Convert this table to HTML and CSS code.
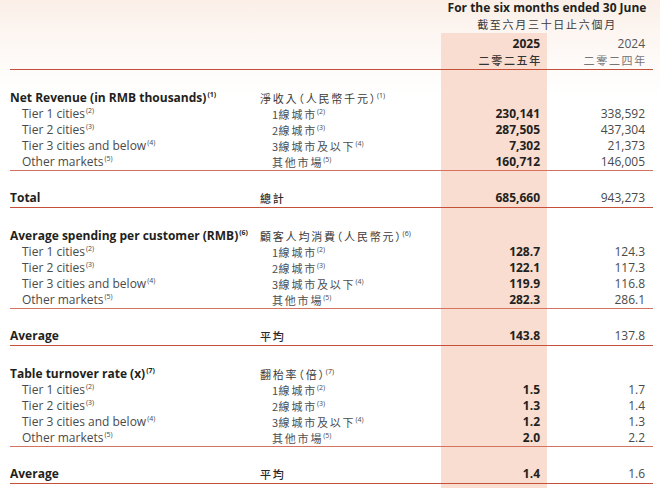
FILE: index.html
```html
<!DOCTYPE html>
<html lang="en">
<head>
<meta charset="utf-8">
<title>Operating data</title>
<link rel="stylesheet" href="styles.css">
</head>
<body>
<div class="page">
<table class="data">
  <colgroup>
    <col class="c-en">
    <col class="c-zh">
    <col class="c-cur">
    <col class="c-prev">
  </colgroup>
  <tbody>
    <tr class="h1">
      <td></td><td></td>
      <td colspan="2" class="period">For the six months ended 30 June</td>
    </tr>
    <tr class="h2">
      <td></td><td></td>
      <td colspan="2" class="period-zh">截至六月三十日止六個月</td>
    </tr>
    <tr class="h3">
      <td></td><td></td>
      <td class="num cur">2025</td>
      <td class="num prev light">2024</td>
    </tr>
    <tr class="h4 thick">
      <td></td><td></td>
      <td class="num cur zh-yr">二零二五年</td>
      <td class="num prev zh-yr light">二零二四年</td>
    </tr>

    <tr class="first">
      <td class="en head">Net Revenue (in RMB thousands)<span class="s">(1)</span></td>
      <td class="zh head-zh">淨收入（人民幣千元）<span class="s">(1)</span></td>
      <td class="num cur"></td><td class="num prev"></td>
    </tr>
    <tr>
      <td class="en sub">Tier 1 cities<span class="s">(2)</span></td>
      <td class="zh sub"><span class="d">1</span>線城市<span class="s">(2)</span></td>
      <td class="num cur">230,141</td><td class="num prev">338,592</td>
    </tr>
    <tr>
      <td class="en sub">Tier 2 cities<span class="s">(3)</span></td>
      <td class="zh sub"><span class="d">2</span>線城市<span class="s">(3)</span></td>
      <td class="num cur">287,505</td><td class="num prev">437,304</td>
    </tr>
    <tr>
      <td class="en sub">Tier 3 cities and below<span class="s">(4)</span></td>
      <td class="zh sub"><span class="d">3</span>線城市及以下<span class="s">(4)</span></td>
      <td class="num cur">7,302</td><td class="num prev">21,373</td>
    </tr>
    <tr class="thin">
      <td class="en sub">Other markets<span class="s">(5)</span></td>
      <td class="zh sub">其他市場<span class="s">(5)</span></td>
      <td class="num cur">160,712</td><td class="num prev">146,005</td>
    </tr>
    <tr class="total thick">
      <td class="en head">Total</td>
      <td class="zh total-zh">總計</td>
      <td class="num cur">685,660</td><td class="num prev">943,273</td>
    </tr>

    <tr class="first">
      <td class="en head">Average spending per customer (RMB)<span class="s">(6)</span></td>
      <td class="zh head-zh">顧客人均消費（人民幣元）<span class="s">(6)</span></td>
      <td class="num cur"></td><td class="num prev"></td>
    </tr>
    <tr>
      <td class="en sub">Tier 1 cities<span class="s">(2)</span></td>
      <td class="zh sub"><span class="d">1</span>線城市<span class="s">(2)</span></td>
      <td class="num cur">128.7</td><td class="num prev">124.3</td>
    </tr>
    <tr>
      <td class="en sub">Tier 2 cities<span class="s">(3)</span></td>
      <td class="zh sub"><span class="d">2</span>線城市<span class="s">(3)</span></td>
      <td class="num cur">122.1</td><td class="num prev">117.3</td>
    </tr>
    <tr>
      <td class="en sub">Tier 3 cities and below<span class="s">(4)</span></td>
      <td class="zh sub"><span class="d">3</span>線城市及以下<span class="s">(4)</span></td>
      <td class="num cur">119.9</td><td class="num prev">116.8</td>
    </tr>
    <tr class="thin">
      <td class="en sub">Other markets<span class="s">(5)</span></td>
      <td class="zh sub">其他市場<span class="s">(5)</span></td>
      <td class="num cur">282.3</td><td class="num prev">286.1</td>
    </tr>
    <tr class="total thick">
      <td class="en head">Average</td>
      <td class="zh total-zh">平均</td>
      <td class="num cur">143.8</td><td class="num prev">137.8</td>
    </tr>

    <tr class="first">
      <td class="en head">Table turnover rate (x)<span class="s">(7)</span></td>
      <td class="zh head-zh">翻枱率（倍）<span class="s">(7)</span></td>
      <td class="num cur"></td><td class="num prev"></td>
    </tr>
    <tr>
      <td class="en sub">Tier 1 cities<span class="s">(2)</span></td>
      <td class="zh sub"><span class="d">1</span>線城市<span class="s">(2)</span></td>
      <td class="num cur">1.5</td><td class="num prev">1.7</td>
    </tr>
    <tr>
      <td class="en sub">Tier 2 cities<span class="s">(3)</span></td>
      <td class="zh sub"><span class="d">2</span>線城市<span class="s">(3)</span></td>
      <td class="num cur">1.3</td><td class="num prev">1.4</td>
    </tr>
    <tr>
      <td class="en sub">Tier 3 cities and below<span class="s">(4)</span></td>
      <td class="zh sub"><span class="d">3</span>線城市及以下<span class="s">(4)</span></td>
      <td class="num cur">1.2</td><td class="num prev">1.3</td>
    </tr>
    <tr class="thin">
      <td class="en sub">Other markets<span class="s">(5)</span></td>
      <td class="zh sub">其他市場<span class="s">(5)</span></td>
      <td class="num cur">2.0</td><td class="num prev">2.2</td>
    </tr>
    <tr class="total thick">
      <td class="en head">Average</td>
      <td class="zh total-zh">平均</td>
      <td class="num cur">1.4</td><td class="num prev">1.6</td>
    </tr>
    <tr class="tail">
      <td></td><td></td><td class="cur"></td><td></td>
    </tr>
  </tbody>
</table>
</div>
</body>
</html>
```
FILE: styles.css
```css
html, body {
  margin: 0;
  padding: 0;
}
body {
  width: 660px;
  height: 488px;
  overflow: hidden;
  background: linear-gradient(to bottom, #fbefe8 0px, #fdf7f3 40px, #ffffff 95px);
  font-family: "Open Sans", "Noto Sans", "Noto Sans CJK TC", sans-serif;
  color: #4a4a4a;
}
.page {
  padding-left: 10px;
}
.data {
  border-collapse: collapse;
  border-spacing: 0;
  table-layout: fixed;
  width: 643px;
}
.c-en { width: 250px; }
.c-zh { width: 181px; }
.c-cur { width: 106px; }
.c-prev { width: 106px; }

.data td {
  padding: 0;
  height: 16px;
  line-height: 16px;
  font-size: 12px;
  white-space: nowrap;
  vertical-align: top;
}

.h1 td { height: 16px; }
.h2 td { height: 17px; }
.h3 td { height: 16px; padding-top: 3px; }
.h4 td { height: 16px; padding-bottom: 1px; }

.period {
  text-align: center;
  font-weight: 700;
  color: #231f20;
}
.period-zh {
  text-align: center;
  font-family: "Noto Sans CJK TC", sans-serif;
  font-size: 11px !important;
  letter-spacing: 1.7px;
  color: #3a3a3a;
}
.zh-yr {
  font-family: "Noto Sans CJK TC", sans-serif;
  font-size: 11px !important;
  letter-spacing: 1.7px;
}

.num {
  text-align: right;
}
.cur {
  background: #f8ddd0;
  padding-right: 7px !important;
  font-weight: 700;
  color: #231f20;
}
.prev {
  padding-right: 8px !important;
  color: #4a4a4a;
}
.light { font-weight: 400; color: #555; }
.h4 .cur.zh-yr { font-weight: 500; color: #333; padding-right: 5px !important; }
.h4 .prev.zh-yr { color: #777; padding-right: 6px !important; }

.en.head {
  font-weight: 700;
  color: #231f20;
}
.en.sub {
  padding-left: 12px;
}
.zh {
  font-family: "Noto Sans CJK TC", sans-serif;
  font-size: 11px !important;
  letter-spacing: 1.8px;
  font-feature-settings: "halt";
  color: #4d4d4d;
}
.zh.sub {
  padding-left: 12px;
}
.d {
  letter-spacing: 0.5px;
}
.head-zh {
  color: #3a3a3a;
}
.total-zh {
  color: #2a2a2a;
  font-weight: 500;
}

.s {
  font-size: 7px;
  vertical-align: 5px;
  line-height: 0;
  letter-spacing: 0;
  margin-left: 1px;
  font-family: "Open Sans", sans-serif;
  font-feature-settings: normal;
}
.zh .s { margin-left: 0; }

.first td { padding-top: 20px; }
.thin td { border-bottom: 1px solid #d4735f; }
.total td { padding-top: 19px; padding-bottom: 1px; }
.thick td { border-bottom: 1.5px solid #c4503a; }
.tail td { height: 10px; }
```
